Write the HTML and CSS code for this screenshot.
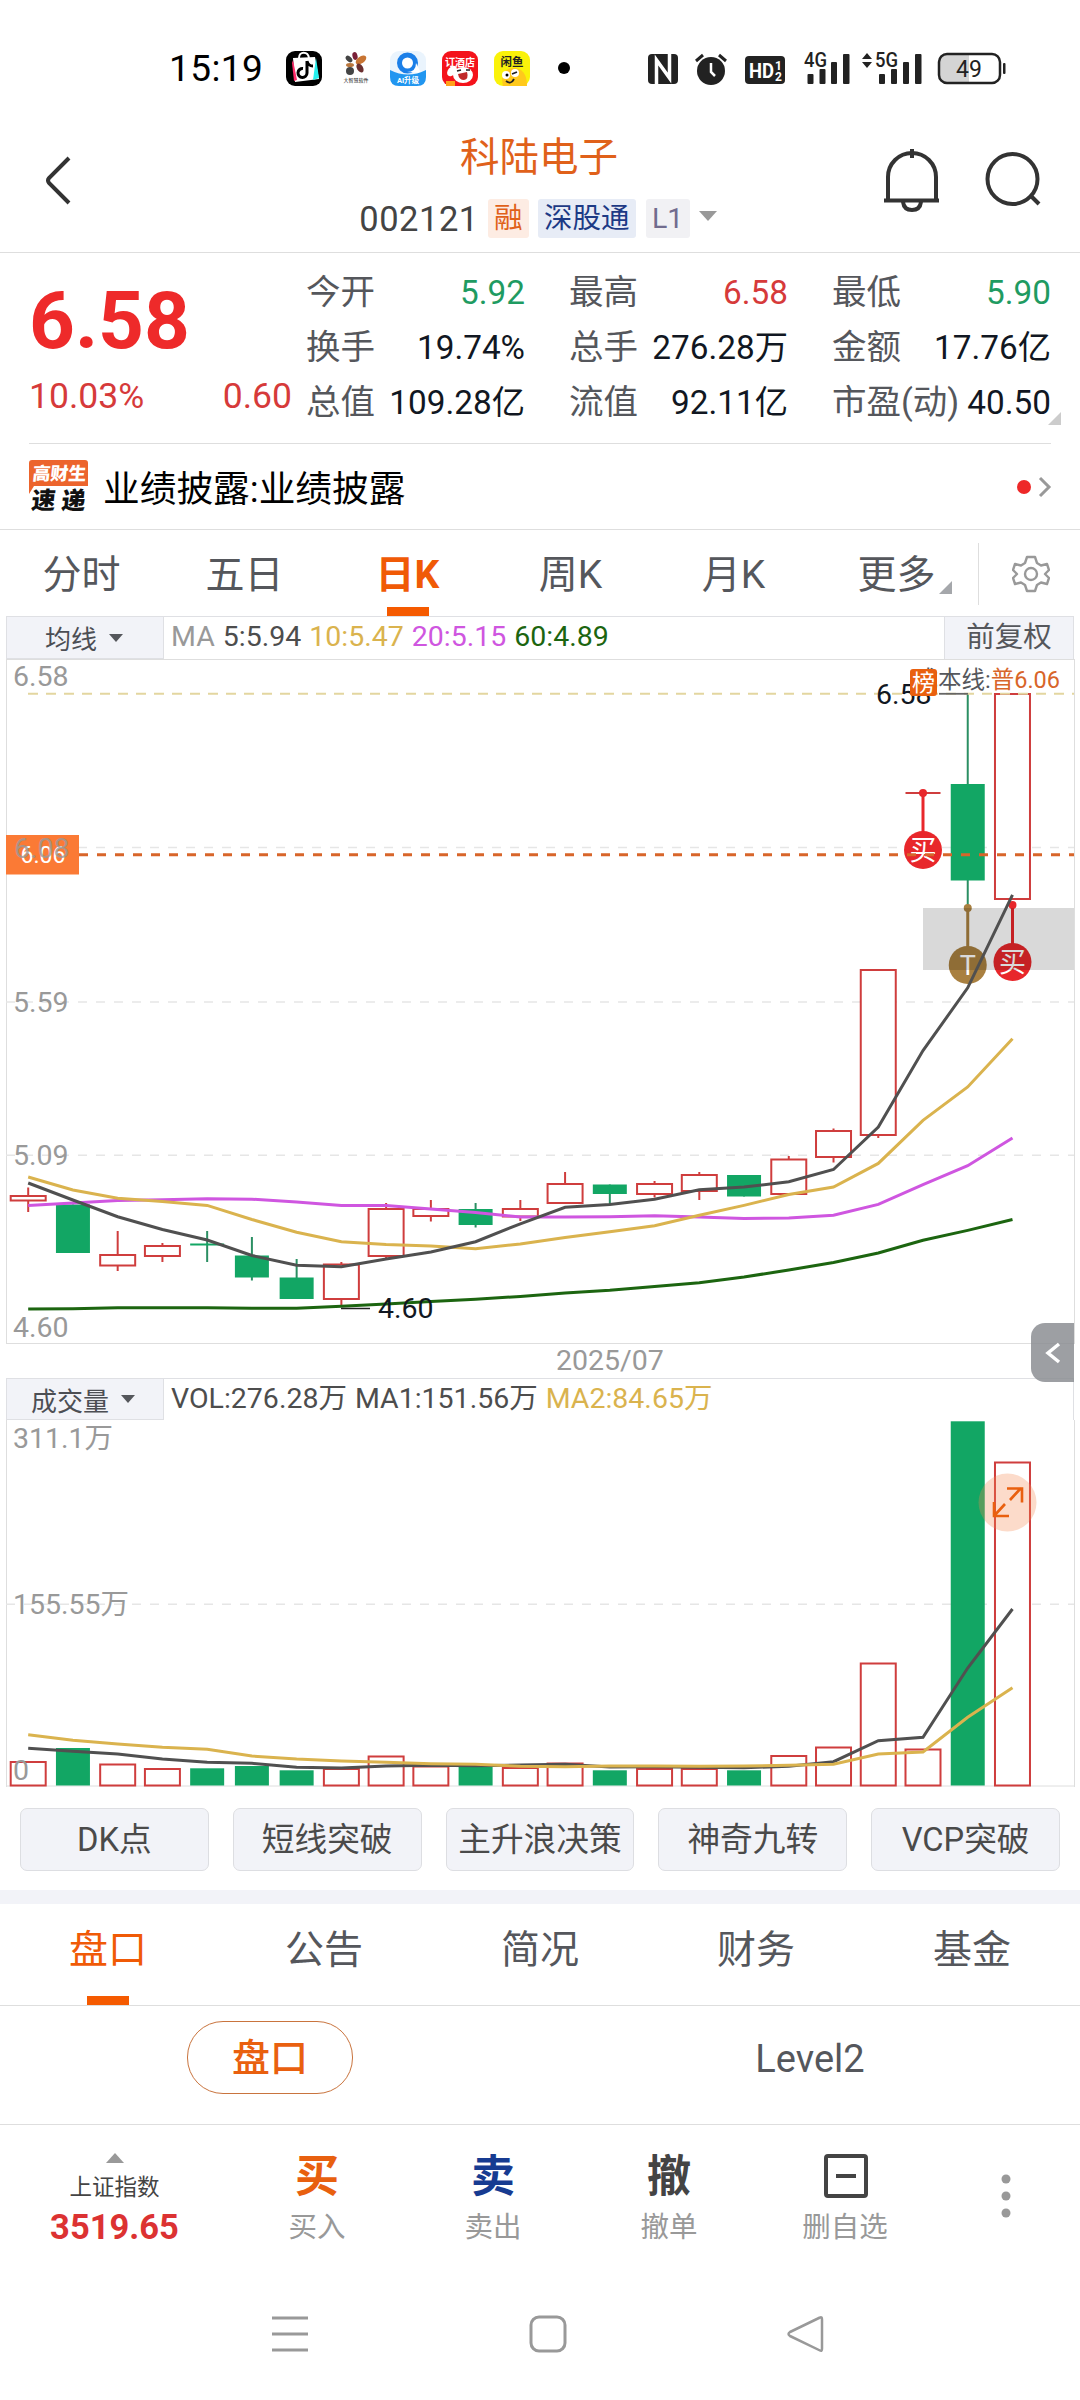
FILE: index.html
```html
<!DOCTYPE html>
<html lang="zh-CN">
<head>
<meta charset="utf-8">
<title>科陆电子 002121</title>
<link rel="stylesheet" href="styles.css">
</head>
<body>
<div class="screen">
  <div class="status">
    <span class="clock">15:19</span>
    <svg class="status-icons" width="818" height="60" viewBox="262 38 818 60">
      <rect x="286" y="51" width="36" height="35" rx="9" fill="#000"/>
      <path d="M293 58l22-1 4 22-24 3z" fill="#fff"/>
      <path d="M293 60l4 20-3 1-2-18z" fill="#ff2d6b"/><path d="M316 58l3 20-6 2z" fill="#25f0ee"/>
      <path d="M299 58c0-7 9-7 10 0" fill="none" stroke="#fff" stroke-width="2"/>
      <path d="M307 61v12a4.500 4.500 0 1 1-4-4.500M307 61c1 4 3 5 6 5" fill="none" stroke="#000" stroke-width="3"/>
      <ellipse cx="355" cy="56" rx="2.500" ry="4" fill="#7a2038" transform="rotate(-15 355 56)"/>
      <ellipse cx="361" cy="60" rx="6" ry="3.500" fill="#c87533" transform="rotate(-35 361 60)"/>
      <ellipse cx="349" cy="59" rx="2.500" ry="4" fill="#444" transform="rotate(-45 349 59)"/>
      <ellipse cx="350" cy="65" rx="4" ry="2" fill="#b8763d"/>
      <circle cx="350" cy="71" r="4" fill="#444"/>
      <ellipse cx="360" cy="68" rx="3" ry="5" fill="#6b3030" transform="rotate(-30 360 68)"/>
      <text x="343.500" y="81.500" font-size="5" fill="#111">大智慧软件</text>
      <rect x="390" y="51" width="36" height="35" rx="9" fill="#eaf4fd"/>
      <circle cx="407.500" cy="63" r="8" fill="#fff" stroke="#1b7fe8" stroke-width="5"/>
      <path d="M407 72q9 0 9-9l5 10z" fill="#fff"/>
      <path d="M390 70q18 9 36 0v7q0 9-9 9h-18q-9 0-9-9z" fill="#2196f0"/>
      <text x="408" y="83" font-size="7.500" font-weight="700" text-anchor="middle" fill="#fff">AI升级</text>
      <rect x="442" y="51" width="36" height="35" rx="9" fill="#f4131b"/>
      <ellipse cx="463" cy="75" rx="10" ry="8" fill="#fff"/><ellipse cx="452" cy="71" rx="4" ry="6" fill="#fff" transform="rotate(40 452 71)"/>
      <path d="M458 74l9-2q2 7-3 8-5 0-6-6" fill="#c02a2a"/><path d="M457 71l4-1M466 70l4 0" stroke="#222" stroke-width="1.500"/>
      <rect x="446" y="81" width="9" height="5" fill="#ffa21a"/>
      <text x="460" y="66" font-size="10" font-weight="700" text-anchor="middle" fill="#fff">订酒店</text>
      <rect x="494" y="51" width="36" height="35" rx="9" fill="#faf20a"/>
      <path d="M503 86q-4-17 10-18 14 0 14 18z" fill="#ffc91c"/>
      <circle cx="506" cy="75" r="4" fill="#fff"/><circle cx="515" cy="73" r="4" fill="#fff"/>
      <circle cx="507" cy="75" r="1.500"/><path d="M512 74l5-2M506 81q5 4 8-2" fill="none" stroke="#222" stroke-width="1.800"/>
      <text x="512" y="66" font-size="11.500" font-weight="700" text-anchor="middle" fill="#222">闲鱼</text>
      <circle cx="564" cy="68" r="6" fill="#000"/>
      <rect x="648" y="54" width="30" height="30" rx="4" fill="#222"/>
      <path d="M656.500 84V60l13 18V54" fill="none" stroke="#fff" stroke-width="3.500"/>
      <circle cx="711" cy="71" r="14" fill="#222"/>
      <path d="M696 61l7-6M726 61l-7-6" stroke="#222" stroke-width="3"/>
      <path d="M711 63v9l4 4" stroke="#fff" stroke-width="2.500" fill="none"/>
      <rect x="745" y="56" width="40" height="28" rx="4" fill="#222"/>
      <text x="749" y="78" font-size="21" font-weight="700" fill="#fff" textLength="25" lengthAdjust="spacingAndGlyphs">HD</text>
      <text x="775" y="70" font-size="12" font-weight="700" fill="#fff">1</text>
      <text x="775" y="81" font-size="12" font-weight="700" fill="#fff">2</text>
      <g fill="#222">
        <rect x="807.500" y="74" width="6" height="10" rx="1"/><rect x="819.500" y="69" width="6" height="15" rx="1"/><rect x="831" y="62" width="6" height="22" rx="1"/><rect x="843" y="54" width="6.500" height="30" rx="1"/>
        <rect x="879" y="74" width="6" height="10" rx="1"/><rect x="891" y="69" width="6" height="15" rx="1"/><rect x="903" y="62" width="6" height="22" rx="1"/><rect x="915" y="54" width="6.500" height="30" rx="1"/>
        <path d="M862 59l5-6 5 6zM862 62l5 6 5-6z"/>
      </g>
      <text x="804" y="67" font-size="20" font-weight="500" fill="#222" textLength="23" lengthAdjust="spacingAndGlyphs">4G</text>
      <text x="875" y="67" font-size="20" font-weight="500" fill="#222" textLength="23" lengthAdjust="spacingAndGlyphs">5G</text>
      <path d="M947 54h22v29h-22q-8 0-8-8V62q0-8 8-8z" fill="#d4d4d4"/>
      <rect x="939" y="54" width="61" height="29" rx="8" fill="none" stroke="#222" stroke-width="2.500"/>
      <rect x="1003" y="63" width="2.500" height="11" rx="1" fill="#222"/>
      <text x="969" y="76.500" font-size="23" text-anchor="middle" fill="#222">49</text>
    </svg>
  </div>

  <header class="header">
    <svg width="160" height="140" viewBox="0 112 160 140"><path d="M69 158L49 178q-2 2.500 0 5L69 203" fill="none" stroke="#333" stroke-width="4"/></svg>
    <div class="title">
      <h1>科陆电子</h1>
      <div class="code"><span>002121</span><b class="chip chip-o">融</b><b class="chip chip-b">深股通</b><b class="chip chip-g">L1</b><i class="down big"></i></div>
    </div>
    <svg width="220" height="140" viewBox="860 112 220 140" fill="none" stroke="#333" stroke-width="4">
      <path d="M888 200v-23a24 24 0 0 1 48 0v23M884 200.500h55M903 202q1 8 9 8t9-8"/><path d="M912 149v9"/>
      <circle cx="1012.500" cy="179" r="25"/><path d="M1030 195l9 9"/>
    </svg>
  </header>

  <section class="quote">
    <div class="price"><strong>6.58</strong><div class="change"><span>10.03%</span><span>0.60</span></div></div>
    <dl class="stats">
      <div><dt>今开</dt><dd class="green">5.92</dd></div><div><dt>最高</dt><dd class="red">6.58</dd></div><div><dt>最低</dt><dd class="green">5.90</dd></div>
      <div><dt>换手</dt><dd>19.74%</dd></div><div><dt>总手</dt><dd>276.28万</dd></div><div><dt>金额</dt><dd>17.76亿</dd></div>
      <div><dt>总值</dt><dd>109.28亿</dd></div><div><dt>流值</dt><dd>92.11亿</dd></div><div><dt>市盈(动)</dt><dd>40.50</dd></div>
    </dl>
    <svg class="corner" width="13" height="13"><path d="M13 0v13H0z" fill="#ccc"/></svg>
  </section>

  <section class="news">
    <svg width="60" height="54" viewBox="0 0 60 54">
      <path d="M3 0h53q3 0 3 3v23H5l-5 8V3q0-3 3-3z" fill="#ec642c"/>
      <g font-weight="900" transform="skewX(-6)"><text x="5" y="20" font-size="18" fill="#fff">高财生</text>
      <text x="7" y="49" font-size="24" fill="#111" textLength="54">速递</text></g>
    </svg>
    <span class="headline">业绩披露:业绩披露</span>
    <svg width="36" height="24" viewBox="0 0 36 24"><circle cx="8" cy="12" r="7" fill="#ee2828"/><path d="M24 3l9 9-9 9" fill="none" stroke="#999" stroke-width="3"/></svg>
  </section>

  <nav class="periods">
    <a>分时</a><a>五日</a><a class="on">日K</a><a>周K</a><a>月K</a><a class="more">更多<svg width="13" height="13"><path d="M13 0v13H0z" fill="#a5a7ab"/></svg></a>
    <span class="gear"><svg width="38" height="38" viewBox="-19 -19 38 38" fill="none" stroke="#999" stroke-width="2.400" stroke-linejoin="round"><path d="M-4-17h8l2 6 4 2.500 6-1.500 2 6-4 4 4 4-2 6-6-1.500-4 2.500-2 6h-8l-2-6-4-2.500-6 1.500-2-6 4-4-4-4 2-6 6 1.500 4-2.500z"/><circle r="6"/></svg></span>
  </nav>

  <div class="legend ma">
    <span class="picker">均线<i class="down"></i></span>
    <span class="values"><i class="c-grey">MA</i><i class="c-dark">5:5.94</i><i class="c-gold">10:5.47</i><i class="c-pink">20:5.15</i><i class="c-forest">60:4.89</i></span>
    <span class="adjust">前复权</span>
  </div>
  <svg id="kline" class="chart" width="1080" height="685" viewBox="0 659 1080 685"></svg>
  <div class="date">2025/07<span class="handle"><svg width="16" height="22" fill="none" stroke="#fff" stroke-width="3.500"><path d="M14 2L3 11l11 9"/></svg></span></div>
  <div class="legend vol">
    <span class="picker">成交量<i class="down"></i></span>
    <span class="values"><i class="c-dark">VOL:276.28万</i><i class="c-dark">MA1:151.56万</i><i class="c-gold">MA2:84.65万</i></span>
  </div>
  <svg id="volume" class="chart" width="1080" height="368" viewBox="0 1420 1080 368"></svg>

  <div class="signals"><button>DK点</button><button>短线突破</button><button>主升浪决策</button><button>神奇九转</button><button>VCP突破</button></div>

  <nav class="sections"><a class="on">盘口</a><a>公告</a><a>简况</a><a>财务</a><a>基金</a></nav>
  <div class="subtabs"><span><b class="pill">盘口</b></span><span>Level2</span></div>

  <footer class="actions">
    <div class="index"><svg width="18" height="10"><path d="M9 0l9 10H0z" fill="#999"/></svg><span>上证指数</span><strong>3519.65</strong></div>
    <div class="act"><b class="buy">买</b><span>买入</span></div>
    <div class="act"><b class="sell">卖</b><span>卖出</span></div>
    <div class="act"><b>撤</b><span>撤单</span></div>
    <div class="act"><b class="pic"><svg width="44" height="44" fill="none" stroke="#444" stroke-width="4"><rect x="2" y="2" width="40" height="40" rx="2"/><path d="M12 22h20"/></svg></b><span>删自选</span></div>
    <div class="dots"><svg width="10" height="46" fill="#999"><circle cx="5" cy="6" r="4.500"/><circle cx="5" cy="23" r="4.500"/><circle cx="5" cy="40" r="4.500"/></svg></div>
  </footer>
  <div class="sysnav">
    <svg width="38" height="38" stroke="#999" stroke-width="3"><path d="M1 3h36M1 19h36M1 35h36"/></svg>
    <svg width="38" height="38" fill="none" stroke="#999" stroke-width="3"><rect x="2" y="2" width="34" height="34" rx="8"/></svg>
    <svg width="38" height="38" fill="none" stroke="#999" stroke-width="2.500" stroke-linejoin="round"><path d="M34 2.500q2-1 2 2v29q0 3-2 2L4 21q-3-2 0-4z"/></svg>
  </div>
</div>
<script src="chart.js"></script>
</body>
</html>
```
FILE: styles.css
```css
* { box-sizing: border-box; }
body { margin: 0; background: #fff; font-family: Roboto, "Noto Sans CJK SC", sans-serif; color: #55575c; }
i { font-style: normal; }
h1, dl, dd { margin: 0; }
svg { display: block; }
.screen { width: 1080px; height: 2400px; overflow: hidden; display: flex; flex-direction: column; }
.screen > * { flex: none; }

.status { height: 112px; padding-top: 38px; display: flex; align-items: flex-start; }
.clock { width: 262px; padding-left: 169px; font-size: 37px; line-height: 62px; color: #000; letter-spacing: .4px; }

.header { height: 141px; display: flex; justify-content: space-between; border-bottom: 1px solid #dedede; }
.title { flex: 1; padding: 18px 0 0 60px; width: 700px; display: flex; flex-direction: column; align-items: center; margin-left: -60px; }
.title h1 { padding-left: 58px; font-size: 39.5px; line-height: 56px; font-weight: 400; color: #e0611a; }
.code { display: flex; align-items: center; height: 40px; margin: 12px 0 0 56px; color: #444; font-size: 34.5px; }
.code > span { letter-spacing: .5px; padding-top: 2px; }
.chip { height: 39px; line-height: 40px; border-radius: 3px; font-weight: 400; font-size: 28.5px; text-align: center; }
.chip-o { width: 41px; margin-left: 9px; background: #fdece3; color: #e0611a; }
.chip-b { width: 98px; margin-left: 9px; background: #e7ecf6; color: #1d3a85; }
.chip-g { width: 44px; margin-left: 10px; background: #f1f1f4; color: #716c8e; }
.down { display: inline-block; border: solid transparent; border-width: 8px 7.5px 0; border-top-color: #55575c; }
.down.big { border-width: 10px 9px 0; border-top-color: #999; margin-left: 9px; margin-top: -4px; }

.quote { height: 191px; margin: 0 29px; border-bottom: 1px solid #dedede; display: flex; position: relative; }
.price { width: 277px; padding-top: 26px; }
.price strong { display: block; font-size: 80px; line-height: 84px; font-weight: 700; color: #ee2a2a; }
.change { width: 263px; margin-top: 12px; display: flex; justify-content: space-between; font-size: 35.5px; line-height: 42px; color: #d63a3a; }
.stats { flex: 1; padding-top: 12px; display: grid; grid-template-columns: repeat(3, 219px); grid-auto-rows: 55px; column-gap: 44px; }
.stats div { display: flex; justify-content: space-between; align-items: center; white-space: nowrap; line-height: 55px; }
.stats dt { font-size: 34.5px; }
.stats dd { font-size: 33.300px; color: #111722; }
.stats .green { color: #1f9b62; }
.stats .red { color: #d63a3a; }
.corner { position: absolute; right: -10px; top: 159px; }

.news { height: 86px; padding: 0 28px 0 29px; border-bottom: 1px solid #dedede; display: flex; align-items: center; }
.headline { flex: 1; padding: 0 0 2px 14px; font-size: 36.700px; color: #000; }

.periods { height: 86px; display: flex; font-size: 39px; }
.periods a { width: 163px; line-height: 90px; text-align: center; position: relative; }
.more svg { position: absolute; right: 26px; top: 51px; }
.on { color: #f05a06; position: relative; }
.periods .on { font-weight: 700; }
.on::after { content: ""; position: absolute; left: 50%; bottom: 0; width: 42px; height: 9px; margin-left: -21px; background: #f55a00; }
.gear { height: 62px; margin-top: 13px; border-left: 1px solid #dedede; flex: 1; display: flex; align-items: center; justify-content: center; padding-left: 2px; }

.legend { margin: 0 6px; border: 1px solid #dfe0e4; border-bottom: 0; display: flex; font-size: 28.5px; }
.ma { height: 43px; }
.vol { height: 42px; }
.picker { width: 157px; background: #f2f3f8; border-right: 1px solid #dfe0e4; border-bottom: 1px solid #dfe0e4; display: flex; align-items: center; justify-content: center; gap: 12px; padding-right: 2px; font-size: 26px; color: #4c4e54; }
.vol .picker { padding-right: 4px; }
.values { flex: 1; display: flex; gap: 8px; padding-left: 7px; line-height: 40px; white-space: nowrap; }
.adjust { width: 129px; background: #f2f3f8; border-left: 1px solid #dfe0e4; text-align: center; font-size: 28.5px; line-height: 42px; }
.c-grey { color: #999; } .c-dark { color: #4d4d4d; } .c-gold { color: #dab34e; } .c-pink { color: #cf56e0; } .c-forest { color: #1c6510; }
.chart text { font-size: 28.500px; }

.date { height: 34px; line-height: 34px; padding-left: 556px; font-size: 28.5px; color: #999; position: relative; }
.handle { position: absolute; left: 1031px; top: -21px; width: 43px; height: 59px; border-radius: 14px 0 0 14px; background: rgba(140,142,147,.85); display: flex; align-items: center; justify-content: center; }

.signals { height: 102px; padding: 20px; display: grid; grid-template-columns: repeat(5, 1fr); gap: 24px; }
.signals button { height: 63px; padding: 0; border: 1px solid #dddee2; border-radius: 7px; background: #f2f3f8; font: 32.700px/58px Roboto, "Noto Sans CJK SC", sans-serif; color: #4a4a4a; white-space: nowrap; }

.sections { height: 116px; border-top: 14px solid #f2f3f8; border-bottom: 1px solid #dedede; display: flex; font-size: 39px; }
.sections a { flex: 1; text-align: center; line-height: 93px; }
.subtabs { height: 119px; border-bottom: 1px solid #dedede; display: flex; font-size: 38px; }
.subtabs span { flex: 1; text-align: center; padding-top: 15px; line-height: 76px; }
.pill { display: block; width: 166px; height: 73px; margin: 0 auto; border: 1.5px solid #c9743e; border-radius: 36px; color: #e9600f; font-weight: 500; line-height: 72px; }

.actions { height: 146px; display: flex; }
.index { width: 229px; display: flex; flex-direction: column; align-items: center; padding-top: 28px; }
.index span { font-size: 22.500px; line-height: 28px; margin-top: 10px; color: #444; }
.index strong { font-size: 34.500px; line-height: 40px; margin-top: 6px; color: #dc3232; font-weight: 700; }
.act { width: 176px; text-align: center; font-size: 28.500px; color: #999; }
.act b { display: flex; align-items: center; justify-content: center; height: 54px; margin-top: 24px; padding-bottom: 6px; font-size: 44px; color: #444; }
.act .pic { padding-bottom: 0; padding-left: 2px; }
.act span { display: block; line-height: 36px; margin-top: 7px; }
.act .buy { color: #e8600f; }
.act .sell { color: #173b91; }
.dots { flex: 1; display: flex; justify-content: center; padding-top: 48px; padding-right: 2px; }
.sysnav { flex: 1; padding: 44px 256px 0 271px; display: flex; justify-content: space-between; }
```
FILE: chart.js
```js
const X0 = 28.2, STEP = 44.74, HALF = 17.5;
const RED = '#cf3d3d', GREEN = '#12a664';
const x = i => X0 + STEP * i;

// direction, body top, body bottom, wick top, wick bottom
const candles = [
  ['r',1196,1200.5,1187.5,1212],['g',1204.5,1253,1204.5,1253],['r',1255,1265.5,1231,1271],['r',1246,1256,1243,1262],
  ['g',1243.5,1245.5,1231,1262],['g',1255.5,1277.5,1237,1280.5],['g',1277.5,1299,1259,1299],['r',1264.5,1299,1262,1306],
  ['r',1209,1256,1203,1259],['r',1209,1216,1200,1221.5],['g',1209,1225,1203,1227.5],['r',1209,1216.5,1200,1221],
  ['r',1184,1203,1172,1203],['g',1184.5,1194,1184.5,1205],['r',1184,1194,1181,1197.5],['r',1175,1191,1172,1200],
  ['g',1175,1196.5,1175,1196.5],['r',1159.5,1194,1156,1194],['r',1131,1157,1128.5,1162.5],['r',970,1135,970,1138],
  ['d',793,793,793,793],['g',784,880.5,694,908],['r',694,899,694,899]
];
const averages = [
  ['#1c6510',[1309,1308.7,1307.8,1307.8,1307.8,1308.2,1308.2,1306.3,1304,1301.6,1299.3,1296.4,1293,1290.3,1286.5,1282.8,1277,1270,1262.5,1253,1240.3,1230.4,1219.5]],
  ['#cf56e0',[1205.4,1203,1200.6,1199.7,1198.8,1199.2,1202,1205.4,1205.4,1209,1212.5,1217,1217,1216.7,1215.7,1217,1218.6,1218,1215.3,1204.4,1184.6,1165.7,1137.9]],
  ['#dab34e',[1177,1190,1198.3,1201.6,1205.4,1219.5,1232.3,1241.7,1244.5,1246,1248.8,1244,1237.5,1231.8,1225.7,1215.3,1205.4,1194.5,1187,1163.4,1120.4,1087,1038.8]],
  ['#505050',[1183,1200,1216.7,1229.5,1240,1255.5,1265.3,1266.7,1259,1252,1241.7,1223.8,1207.3,1204.4,1199.2,1189.8,1187,1181.8,1169.5,1127,1050.6,987.8,894.8]]
];
const volumes = [
  ['r',1762],['g',1748],['r',1764.5],['r',1769],['g',1768.3],['g',1766],['g',1770.3],['r',1769],['r',1756.5],['r',1766.5],['g',1767],['r',1768],
  ['r',1763.5],['g',1770.3],['r',1769],['r',1769],['g',1770.3],['r',1756],['r',1747.5],['r',1663.5],['r',1749.5],['g',1421.3],['r',1462.5]
];
const volumeAverages = [
  ['#505050',[1748.3,1751.3,1754,1759,1762.3,1763.3,1767.3,1768,1766,1765.3,1765.7,1765,1764.3,1767,1766.7,1767.3,1767.7,1766.3,1761.7,1740.7,1737.3,1668,1609]],
  ['#dab34e',[1734.7,1740.3,1744,1747.3,1749.3,1756,1759,1761,1762.3,1763.7,1764.3,1766.3,1766.7,1766,1766,1766.3,1766,1765.3,1764.3,1754,1752,1717.3,1687.7]]
];

const line = (x1, y1, x2, y2, c, w, extra = '') => `<path d="M${x1} ${y1}L${x2} ${y2}" stroke="${c}" stroke-width="${w}" ${extra}/>`;
const text = (px, cy, s, c, extra = '') => `<text x="${px}" y="${cy + 10}" fill="${c}" ${extra}>${s}</text>`;
const curve = ([c, ys]) => `<polyline points="${ys.map((y, i) => x(i).toFixed(1) + ',' + y).join(' ')}" fill="none" stroke="${c}" stroke-width="3"/>`;
const body = (d, i, top, bottom) => d === 'g'
  ? `<rect x="${x(i) - 17}" y="${top}" width="34" height="${bottom - top}" fill="${GREEN}"/>`
  : `<rect x="${x(i) - HALF}" y="${top}" width="35" height="${bottom - top}" fill="#fff" stroke="${RED}" stroke-width="2"/>`;
const grid = y => line(6, y, 1074, y, '#e6e6e6', 1.5, 'stroke-dasharray="9 9"');
const marker = (i, from, cy, c, s) => line(x(i), from, x(i), cy, c, 3) +
  `<circle cx="${x(i)}" cy="${from}" r="4" fill="${c}"/><circle cx="${x(i)}" cy="${cy}" r="19" fill="${c}"/>` +
  `<text x="${x(i)}" y="${cy + 10}" text-anchor="middle" fill="#fff" style="font-size:27px">${s}</text>`;

let k = '<path d="M6.500 659V1344M1074.500 659V1344M6 659.500H1075M6 1343.500H1075" stroke="#dedede" stroke-width="1" fill="none"/>';
k += grid(847.6) + grid(1002) + grid(1155.3);
candles.forEach(([d, t, b, wt, wb], i) => {
  if (d === 'd') { k += line(x(i) - HALF, t, x(i) + HALF, t, RED, 1.8); return; }
  k += line(x(i), wt, x(i), wb, d === 'g' ? '#2b8f63' : RED, 2) + body(d, i, t, b);
});
k += line(28, 693.8, 1074, 693.8, '#e3d6a0', 2, 'stroke-dasharray="10 8"');
k += '<rect x="6" y="835" width="73" height="39.500" fill="#fb7a35"/>';
k += text(20.5, 853, '6.06', '#fff', 'style="font-size:23px"');
k += text(14, 847.6, '6.08', '#999', 'opacity=".8"');
k += marker(20, 793, 850, '#e8272b', '买') + marker(21, 908, 965, '#a98040', 'T') + marker(22, 905, 962, '#e8272b', '买');
k += line(79, 854.7, 1074, 854.7, '#d8652a', 3, 'stroke-dasharray="9 9"');
k += '<rect x="923" y="908" width="151" height="62" fill="#000" opacity=".15"/>';
k += averages.map(curve).join('');
k += [['6.58', 675.5], ['5.59', 1001.5], ['5.09', 1155], ['4.60', 1326.5]].map(([s, y]) => text(13, y, s, '#999')).join('');
k += line(341, 1308.5, 370, 1308.5, '#222', 1.5) + text(378, 1308, '4.60', '#111722');
k += text(876, 694, '6.58', '#111722') + line(939, 693.8, 968, 693.8, '#666', 1.8);
k += '<text x="1060" y="688" text-anchor="end" style="font-size:23.500px" fill="#55575c">成本线:<tspan fill="#d8652a">普6.06</tspan></text>';
k += '<rect x="910" y="669" width="27" height="27" rx="3" fill="#e9600f"/><text x="923.500" y="691" text-anchor="middle" fill="#fff" style="font-size:23px">榜</text>';
document.getElementById('kline').innerHTML = k;

let v = '<path d="M6.500 1420V1787M1074.500 1420V1787M6 1786H1075" stroke="#dedede" stroke-width="1" fill="none"/>' + line(6, 1604.3, 1074, 1604.3, '#e6e6e6', 1.5, 'stroke-dasharray="9 9"');
volumes.forEach(([d, t], i) => { v += body(d, i, t, 1785.5); });
v += volumeAverages.map(curve).join('');
v += text(13, 1438, '311.1万', '#999') + text(13, 1604, '155.55万', '#999') + text(13, 1770, '0', '#999');
v += '<circle cx="1007.500" cy="1502.500" r="29" fill="#f5884f" opacity=".3"/>';
v += '<path d="M1010 1500l11-12M1007 1488.500h15v14M1005 1504l-11 12M1009 1516h-15v-14" fill="none" stroke="#e9600f" stroke-width="2.600"/>';
document.getElementById('volume').innerHTML = v;
```
